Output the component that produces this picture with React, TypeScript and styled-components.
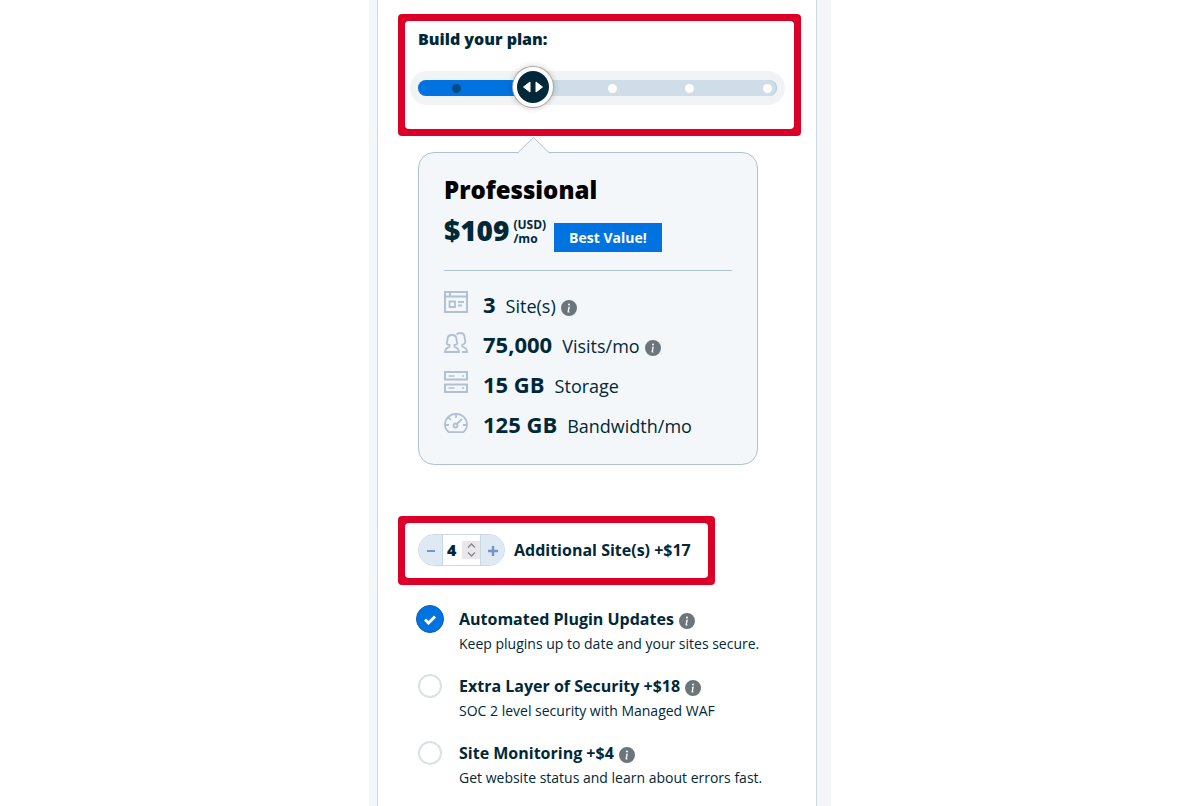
import React, { useState } from "react";
import styled, { createGlobalStyle } from "styled-components";
import { BsInfoCircleFill } from "react-icons/bs";

const ink = "#002838";
const blue = "#0073e0";
const mist = "#f3f7fa";
const line = "#b0c1d1";
const red = "#dc0028";

const GlobalStyle = createGlobalStyle`
  *, *::before, *::after { box-sizing: border-box; }
  body {
    margin: 0;
    background: #fff;
    color: ${ink};
    font-family: "Open Sans", "Noto Sans", sans-serif;
    font-size: 16px;
    line-height: 24px;
  }
  h1, h2, p, ul { margin: 0; padding: 0; }
  button, input { font: inherit; color: inherit; }
`;

const Band = styled.main`
  max-width: 462px;
  min-height: 100vh;
  margin: 0 auto;
  padding: 0 14px 0 8px;
  background: ${mist};
`;

const Panel = styled.div`
  min-height: 100vh;
  padding: 14px 15px 14px 20px;
  background: #fff;
  border: solid #cdd8e3;
  border-width: 0 1px;
`;

const Highlight = styled.section<{ $fit?: boolean }>`
  width: ${(p) => (p.$fit ? "fit-content" : "auto")};
  padding: 7px;
  background: ${red};
  border-radius: 4px;
`;

const PlanBox = styled.div`
  height: 108px;
  padding: 6px 9px 0 5px;
  background: #fff;
  border-radius: 4px;
`;

const PlanLabel = styled.label`
  display: block;
  padding-left: 8px;
  font-weight: 800;
`;

const SliderRail = styled.div`
  margin-top: 20px;
  padding: 9px 8px;
  background: #f1f3f5;
  border-radius: 17px;
`;

const SliderTrack = styled.div`
  position: relative;
  height: 16px;
  background: #cfdde8;
  border-radius: 8px;
  box-shadow: inset -1px 0 0 #b9cad9;
`;

const SliderFill = styled.div`
  height: 16px;
  background: ${blue};
  border-radius: 8px 0 0 8px;
`;

const Stop = styled.span<{ $passed: boolean }>`
  position: absolute;
  top: 4px;
  width: 9px;
  height: 9px;
  margin-left: -4px;
  border-radius: 50%;
  background: ${(p) => (p.$passed ? "#064a8a" : "#fff")};
`;

const Thumb = styled.span`
  position: absolute;
  top: -13px;
  width: 40px;
  height: 40px;
  margin-left: -21px;
  display: grid;
  place-items: center;
  background: ${ink};
  border: 4px solid #fff;
  border-radius: 50%;
  box-shadow: 0 0 0 1px #a9a3a3, 0 0 6px 1px rgba(0, 0, 0, 0.2);
`;

const RangeInput = styled.input`
  position: absolute;
  inset: -12px 0;
  width: 100%;
  height: 40px;
  margin: 0;
  opacity: 0;
  cursor: pointer;
`;

const Card = styled.section`
  position: relative;
  margin: 16px 43px 51px 20px;
  padding: 23px 25px 20px;
  background: ${mist};
  border: 1px solid ${line};
  border-radius: 16px;
`;

const Pointer = styled.svg`
  position: absolute;
  top: -16px;
  left: 98px;
`;

const PlanName = styled.h1`
  color: #000;
  font-size: 24px;
  line-height: 28px;
  font-weight: 800;
`;

const PriceRow = styled.div`
  display: flex;
  align-items: flex-start;
  padding: 8px 0 18px;
  border-bottom: 1px solid ${line};
`;

const Price = styled.strong`
  font-size: 28px;
  line-height: 36px;
  font-weight: 800;
`;

const PriceUnit = styled.span`
  display: flex;
  flex-direction: column;
  margin: 6px 8px 0 4px;
  font-size: 12px;
  line-height: 14px;
  font-weight: 700;
`;

const Badge = styled.span`
  margin-top: 11px;
  padding: 0 15px;
  color: #fff;
  background: ${blue};
  font-size: 14px;
  line-height: 29px;
  font-weight: 700;
`;

const InfoButton = styled.button`
  display: inline-flex;
  align-self: center;
  margin: 4px 0 0 5px;
  padding: 0;
  border: 0;
  background: none;
  color: #6c757b;
  cursor: pointer;
`;

const Features = styled.ul`
  padding-top: 13px;
  list-style: none;
`;

const Feature = styled.li`
  display: flex;
  align-items: baseline;
  height: 40px;
  font-size: 18px;
  line-height: 40px;

  ${InfoButton} {
    margin-top: 8px;
  }
`;

const FeatureIcon = styled.svg`
  align-self: flex-start;
  width: 24px;
  height: 24px;
  margin: 6px 15px 0 0;
  fill: none;
  stroke: ${line};
  stroke-width: 2;
`;

const Amount = styled.strong`
  margin-right: 10px;
  font-size: 22px;
  font-weight: 700;
`;

const SitesBox = styled.div`
  display: flex;
  align-items: center;
  gap: 9px;
  padding: 11px 17px 12px 13px;
  background: #fff;
  border-radius: 4px;
  font-weight: 700;
`;

const Stepper = styled.div`
  display: flex;
  width: 87px;
  height: 32px;
  overflow: hidden;
  background: #fff;
  border: 1px solid #c9d8e4;
  border-radius: 16px;
`;

const StepButton = styled.button`
  display: grid;
  place-items: center;
  width: 23px;
  padding: 0;
  border: 0;
  background: #dfe9f3;
  cursor: pointer;
`;

const StepValue = styled.input`
  flex: 1;
  min-width: 0;
  padding: 0 0 0 4px;
  border: 0;
  border-left: 1px solid #c9d8e4;
  background: #fff;
  font-weight: 800;
  appearance: textfield;
  &::-webkit-inner-spin-button { appearance: none; margin: 0; }
`;

const Spinner = styled.div`
  display: flex;
  flex-direction: column;
  align-self: center;
  width: 18px;
  background: #e9e7eb;
`;

const SpinButton = styled.button`
  display: grid;
  place-items: center;
  height: 9px;
  padding: 0;
  border: 0;
  background: none;
`;

const StepDivider = styled.span`
  width: 1px;
  background: #c9d8e4;
`;

const Addons = styled.ul`
  padding: 20px 0 0 18px;
  list-style: none;
`;

const Addon = styled.li`
  display: grid;
  grid-template-columns: 28px 1fr;
  column-gap: 15px;
  height: 67px;
`;

const CheckSlot = styled.span`
  position: relative;
  display: grid;
  place-items: center;
  height: 28px;
`;

const CheckInput = styled.input`
  appearance: none;
  width: 24px;
  height: 24px;
  margin: 0;
  background: #fff;
  border: 2px solid #dae1e7;
  border-radius: 50%;
  cursor: pointer;
  &:checked {
    width: 28px;
    height: 28px;
    background: ${blue};
    border: 1px solid #0a5cb8;
  }
`;

const CheckMark = styled.svg`
  position: absolute;
  pointer-events: none;
`;

const AddonTitle = styled.div`
  display: flex;
  line-height: 28px;
  font-weight: 700;
`;

const AddonNote = styled.p`
  font-size: 14px;
  line-height: 22px;
`;

const Info = ({ about }: { about: string }) => (
  <InfoButton type="button" aria-label={`About ${about}`}>
    <BsInfoCircleFill size={16} />
  </InfoButton>
);

const icons = {
  sites: (
    <>
      <path d="M1 2h22v20H1zM1 6.500h22M6 2v4" />
      <path d="M5.500 11.500h5.500v5.500H5.500zM14 12h6M14 15.500h4" strokeWidth="1.800" />
    </>
  ),
  visits: (
    <g strokeWidth="1.800" transform="translate(0 1)">
      <path d="M8 4c3 0 4.500 2 4.500 4.500 0 2 .8 2.500.8 4 0 1-1.800 1.200-2.800 1.300v2c2 1 4.500 1 4.500 5.200H1c0-4.200 2.500-4.200 4.500-5.200v-2c-1-.1-2.800-.3-2.800-1.300 0-1.500.8-2 .8-4C3.500 6 5 4 8 4z" />
      <path d="M12.500 3.500c1-1 2-1.500 3.500-1.500 3 0 4.700 2 4.700 4.700 0 2 .9 3.300.4 5-.3 1-1.600 1.600-2.800 1.900V15.500c2 1 4.700 1.300 4.700 5.500h-5" />
    </g>
  ),
  storage: (
    <>
      <path d="M1 2h22v7.500H1zM1 14.500h22V22H1z" />
      <path d="M4.500 6h6M18 6h2M4.500 18h6M18 18h2" strokeWidth="1.600" />
    </>
  ),
  bandwidth: (
    <g strokeWidth="1.800" transform="translate(0 1)">
      <path d="M5 21.200C2.500 19.500 1 16.800 1 13.500 1 7.500 6 2.800 12 2.800s11 4.700 11 10.700c0 3.300-1.500 6-4 7.700z" />
      <path d="M12 3v4M4.500 6.500l2.300 2.300M1 14h4M19 14h4M12.800 13.200 18 8" />
      <circle cx="11.500" cy="14.500" r="2" />
    </g>
  ),
};

const features = [
  { icon: icons.sites, amount: "3", label: "Site(s)", info: true },
  { icon: icons.visits, amount: "75,000", label: "Visits/mo", info: true },
  { icon: icons.storage, amount: "15 GB", label: "Storage", info: false },
  { icon: icons.bandwidth, amount: "125 GB", label: "Bandwidth/mo", info: false },
];

const addons = [
  { id: "updates", title: "Automated Plugin Updates", note: "Keep plugins up to date and your sites secure." },
  { id: "security", title: "Extra Layer of Security +$18", note: "SOC 2 level security with Managed WAF" },
  { id: "monitoring", title: "Site Monitoring +$4", note: "Get website status and learn about errors fast." },
];

const stops = [0, 1, 2, 3, 4];
const stopLeft = (step: number) => `${10.7 + step * 21.6}%`;

export default function App() {
  const [plan, setPlan] = useState(1);
  const [sites, setSites] = useState(4);
  const [chosen, setChosen] = useState<Record<string, boolean>>({ updates: true });
  const addSite = () => setSites(sites + 1);
  const dropSite = () => setSites(Math.max(0, sites - 1));

  return (
    <>
      <GlobalStyle />
      <Band>
        <Panel>
          <Highlight>
            <PlanBox>
              <PlanLabel htmlFor="plan">Build your plan:</PlanLabel>
              <SliderRail>
                <SliderTrack>
                  <SliderFill style={{ width: stopLeft(plan) }} />
                  {stops.map((s) => (
                    <Stop key={s} $passed={s < plan} style={{ left: stopLeft(s) }} />
                  ))}
                  <Thumb style={{ left: stopLeft(plan) }}>
                    <svg width="22" height="12" viewBox="0 0 22 12" fill="#fff" stroke="#fff" strokeLinejoin="round">
                      <path d="M8 1v10L1.500 6zM14 1v10l6.500-5z" />
                    </svg>
                  </Thumb>
                  <RangeInput
                    id="plan"
                    type="range"
                    min={0}
                    max={4}
                    value={plan}
                    onChange={(e) => setPlan(Number(e.target.value))}
                  />
                </SliderTrack>
              </SliderRail>
            </PlanBox>
          </Highlight>

          <Card>
            <Pointer width="33" height="17" viewBox="0 0 33 17">
              <path d="M0 16.500 16.500 0.500 33 16.500" fill={mist} stroke={line} />
            </Pointer>
            <PlanName>Professional</PlanName>
            <PriceRow>
              <Price>$109</Price>
              <PriceUnit>
                <span>(USD)</span>
                <span>/mo</span>
              </PriceUnit>
              <Badge>Best Value!</Badge>
            </PriceRow>
            <Features>
              {features.map((f) => (
                <Feature key={f.label}>
                  <FeatureIcon viewBox="0 0 24 24">{f.icon}</FeatureIcon>
                  <Amount>{f.amount}</Amount>
                  <span>{f.label}</span>
                  {f.info && <Info about={f.label} />}
                </Feature>
              ))}
            </Features>
          </Card>

          <Highlight $fit>
            <SitesBox>
              <Stepper>
                <StepButton type="button" aria-label="Remove a site" onClick={dropSite}>
                  <svg width="10" height="10" stroke="#7596c0" strokeWidth="2">
                    <path d="M1 6h8" />
                  </svg>
                </StepButton>
                <StepValue
                  id="sites"
                  type="number"
                  min={0}
                  value={sites}
                  onChange={(e) => setSites(Number(e.target.value))}
                />
                <Spinner>
                  <SpinButton type="button" aria-label="Increase" onClick={addSite}>
                    <svg width="9" height="5" fill="none" stroke="#8b868c" strokeWidth="1.400">
                      <path d="M1 4.500 4.500 1 8 4.500" />
                    </svg>
                  </SpinButton>
                  <SpinButton type="button" aria-label="Decrease" onClick={dropSite}>
                    <svg width="9" height="5" fill="none" stroke="#8b868c" strokeWidth="1.400">
                      <path d="M1 .5 4.500 4 8 .5" />
                    </svg>
                  </SpinButton>
                </Spinner>
                <StepDivider />
                <StepButton type="button" aria-label="Add a site" onClick={addSite}>
                  <svg width="10" height="12" stroke="#7596c0" strokeWidth="2.500">
                    <path d="M0 7h10M5 2v10" />
                  </svg>
                </StepButton>
              </Stepper>
              <label htmlFor="sites">Additional Site(s) +$17</label>
            </SitesBox>
          </Highlight>

          <Addons>
            {addons.map((a) => (
              <Addon key={a.id}>
                <CheckSlot>
                  <CheckInput
                    id={a.id}
                    type="checkbox"
                    checked={!!chosen[a.id]}
                    onChange={(e) => setChosen({ ...chosen, [a.id]: e.target.checked })}
                  />
                  {chosen[a.id] && (
                    <CheckMark width="14" height="11" fill="none" stroke="#fff" strokeWidth="3">
                      <path d="M2 5.500 5.500 9 12 2.500" />
                    </CheckMark>
                  )}
                </CheckSlot>
                <div>
                  <AddonTitle>
                    <label htmlFor={a.id}>{a.title}</label>
                    <Info about={a.title} />
                  </AddonTitle>
                  <AddonNote>{a.note}</AddonNote>
                </div>
              </Addon>
            ))}
          </Addons>
        </Panel>
      </Band>
    </>
  );
}
